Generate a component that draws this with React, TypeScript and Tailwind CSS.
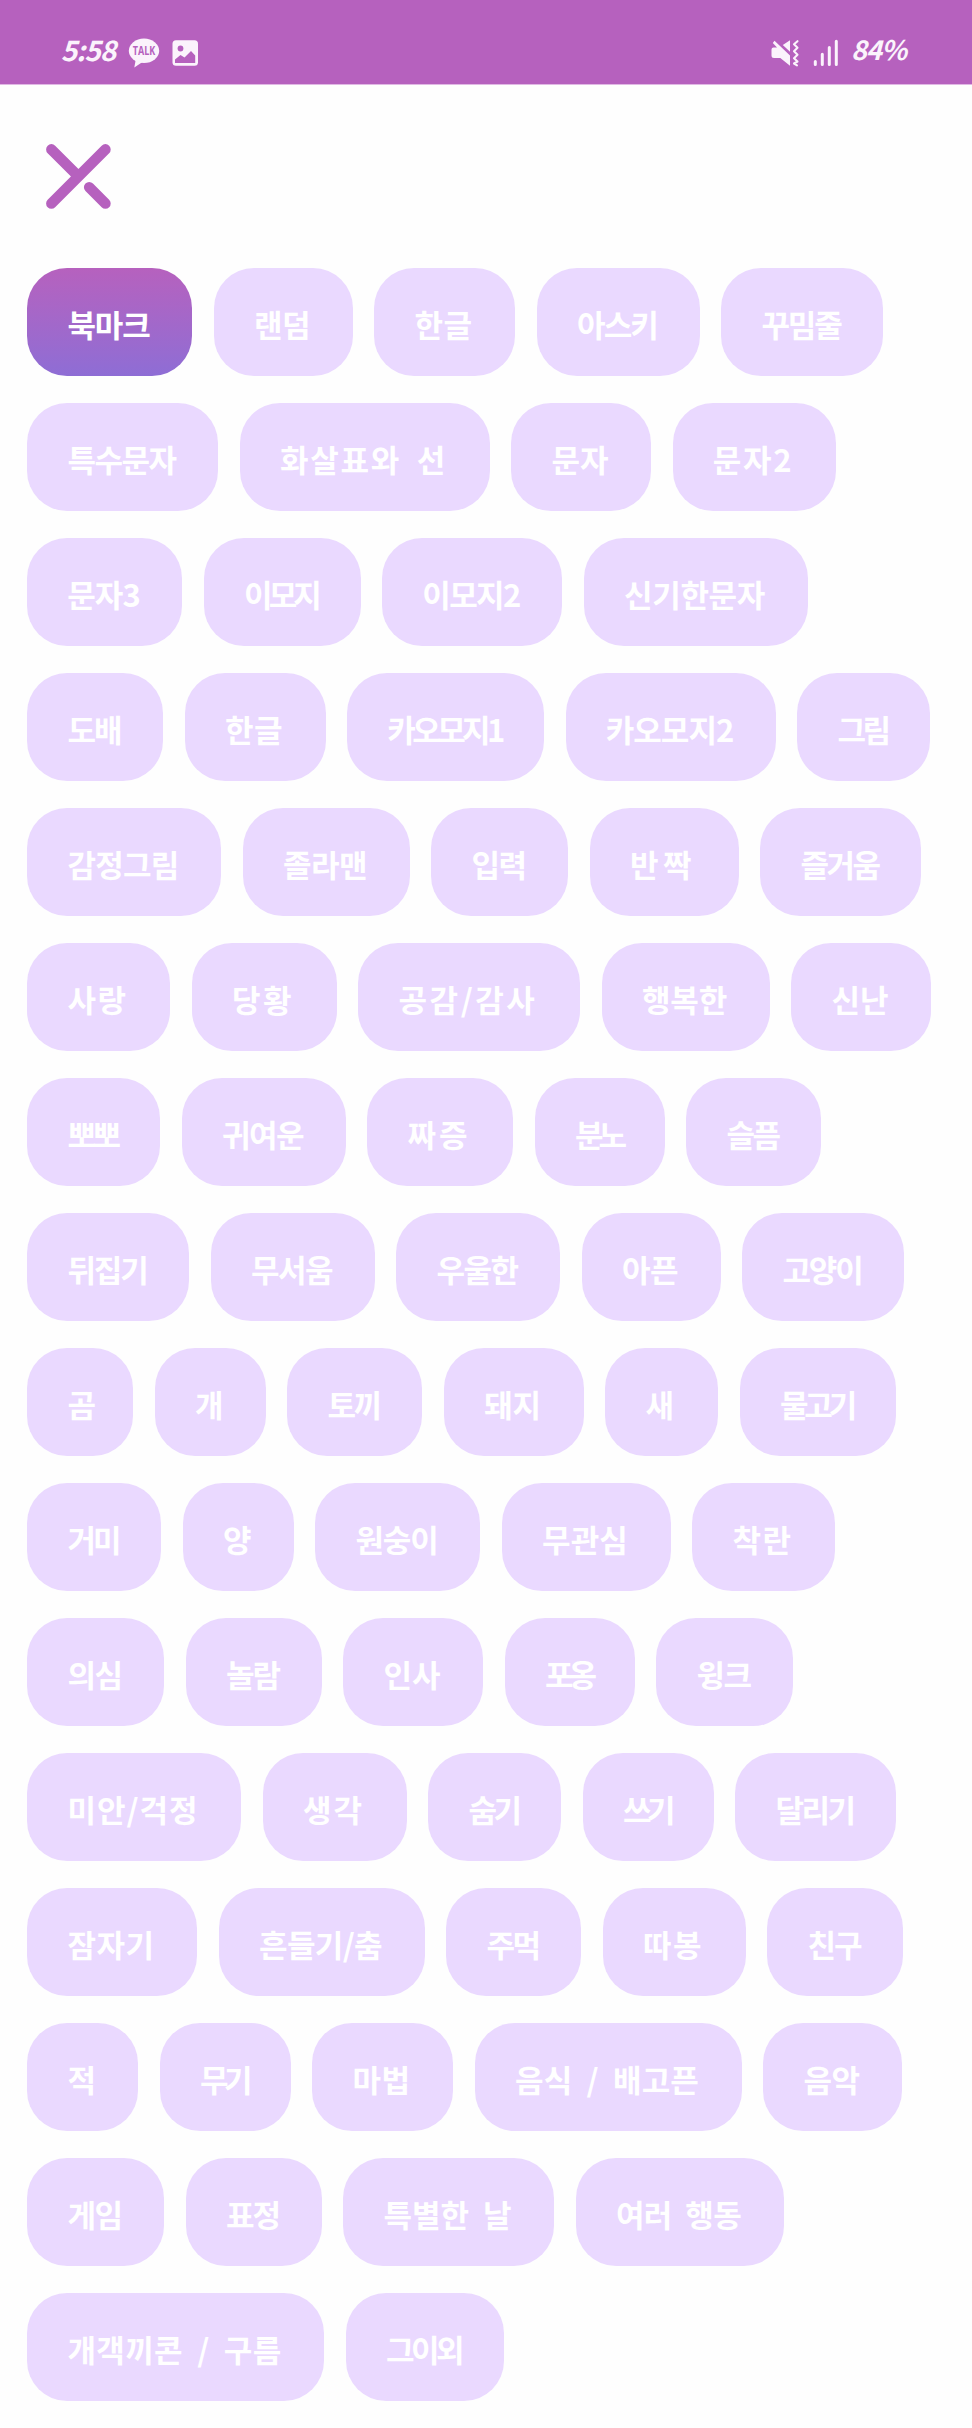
import { useState } from "react";
import clsx from "clsx";

type Category = {
    name: string;
    width: number;
}

// left + right padding inside a chip
const CHIP_PADDING = 83;
const FONT_SIZE = 31;

const categories: Category[] = [
    { name: "북마크", width: 165 },
    { name: "랜덤", width: 139 },
    { name: "한글", width: 141 },
    { name: "아스키", width: 163 },
    { name: "꾸밈줄", width: 162 },
    { name: "특수문자", width: 191 },
    { name: "화살표와 선", width: 250 },
    { name: "문자", width: 140 },
    { name: "문자2", width: 163 },
    { name: "문자3", width: 155 },
    { name: "이모지", width: 157 },
    { name: "이모지2", width: 180 },
    { name: "신기한문자", width: 224 },
    { name: "도배", width: 136 },
    { name: "한글", width: 141 },
    { name: "카오모지1", width: 197 },
    { name: "카오모지2", width: 210 },
    { name: "그림", width: 133 },
    { name: "감정그림", width: 194 },
    { name: "졸라맨", width: 167 },
    { name: "입력", width: 137 },
    { name: "반짝", width: 149 },
    { name: "즐거움", width: 161 },
    { name: "사랑", width: 143 },
    { name: "당황", width: 145 },
    { name: "공감/감사", width: 222 },
    { name: "행복한", width: 168 },
    { name: "신난", width: 140 },
    { name: "뽀뽀", width: 133 },
    { name: "귀여운", width: 164 },
    { name: "짜증", width: 146 },
    { name: "분노", width: 130 },
    { name: "슬픔", width: 135 },
    { name: "뒤집기", width: 162 },
    { name: "무서움", width: 164 },
    { name: "우울한", width: 164 },
    { name: "아픈", width: 139 },
    { name: "고양이", width: 162 },
    { name: "곰", width: 106 },
    { name: "개", width: 111 },
    { name: "토끼", width: 135 },
    { name: "돼지", width: 140 },
    { name: "새", width: 113 },
    { name: "물고기", width: 156 },
    { name: "거미", width: 134 },
    { name: "양", width: 111 },
    { name: "원숭이", width: 165 },
    { name: "무관심", width: 169 },
    { name: "착란", width: 143 },
    { name: "의심", width: 137 },
    { name: "놀람", width: 136 },
    { name: "인사", width: 140 },
    { name: "포옹", width: 130 },
    { name: "윙크", width: 137 },
    { name: "미안/걱정", width: 214 },
    { name: "생각", width: 144 },
    { name: "숨기", width: 133 },
    { name: "쓰기", width: 131 },
    { name: "달리기", width: 161 },
    { name: "잠자기", width: 170 },
    { name: "흔들기/춤", width: 206 },
    { name: "주먹", width: 135 },
    { name: "따봉", width: 143 },
    { name: "친구", width: 136 },
    { name: "적", width: 111 },
    { name: "무기", width: 131 },
    { name: "마법", width: 141 },
    { name: "음식 / 배고픈", width: 267 },
    { name: "음악", width: 139 },
    { name: "게임", width: 137 },
    { name: "표정", width: 136 },
    { name: "특별한 날", width: 211 },
    { name: "여러 행동", width: 208 },
    { name: "개객끼콘 / 구름", width: 297 },
    { name: "그이외", width: 158 },
];

// letter spacing that makes the name fill its chip
const getTracking = (category: Category) => {
    const chars = category.name.split('');
    const natural = chars.reduce((sum, char) => {
        if (char === ' ') return sum + 0.224 * FONT_SIZE + 7;
        if (char === '/') return sum + 0.39 * FONT_SIZE;
        if (/[0-9]/.test(char)) return sum + 0.57 * FONT_SIZE;
        return sum + 0.92 * FONT_SIZE;
    }, 0);
    return (category.width - CHIP_PADDING - natural) / chars.length;
}

const StatusBar = () => {
    return (
        <div className="flex h-[84px] items-start justify-between bg-[#b661be] pl-[60px] pr-[65px] pt-[36px] text-[#fbf3fc] shadow-[0_1px_0_#e0b8e4]">
            <div className="flex items-center">
                <span className="-mt-[7px] w-[56px] whitespace-nowrap text-center text-[28px] font-bold italic leading-[30px] tracking-[-1px]">5:58</span>
                {/* Talk */}
                <svg className="ml-[12px] h-[32px] w-[32px]" viewBox="0 0 32 32">
                    <ellipse cx="16" cy="14.8" rx="15.2" ry="12.2" fill="currentColor" />
                    <path d="M8 22 6.3 31.5 16 25Z" fill="currentColor" />
                    <text x="16" y="19" textAnchor="middle" textLength="22.5" lengthAdjust="spacingAndGlyphs" fontSize="11.5" fontWeight="700" fill="#b661be" fontFamily="Open Sans, sans-serif">TALK</text>
                </svg>
                {/* Picture */}
                <svg className="ml-[12px] h-[32px] w-[26px]" viewBox="0 0 26 32">
                    <rect x="0.5" y="4.3" width="25.5" height="25.5" rx="3.5" fill="currentColor" />
                    <circle cx="8.5" cy="12.5" r="2.9" fill="#b661be" />
                    <path d="M3 27V23.5L8.5 19 12.5 21.5 19 15 23.2 19.5V27Z" fill="#b661be" />
                </svg>
            </div>
            <div className="flex items-center">
                {/* Sound off, vibration */}
                <svg className="h-[32px] w-[28px]" viewBox="0 0 28 32">
                    <path d="M0.5 13.5Q0.5 11.5 2.5 11.5H6L1.8 7 3.5 4.8 19 19.5V29.8L9.3 22H3Q0.5 22 0.5 19.5ZM11.8 9 19 4.2V15.8Z" fill="currentColor" />
                    <path d="M26.5 5.2 23 8.3 26.5 11.8 23 15.3 26.5 18.8 23 22.3 26.5 25.5 23 27.5 26 29.3" fill="none" stroke="currentColor" strokeWidth="2.1" strokeLinejoin="round" strokeLinecap="round" />
                </svg>
                {/* Signal */}
                <svg className="ml-[14px] h-[32px] w-[26px]" viewBox="0 0 26 32" stroke="currentColor" strokeWidth="3" strokeLinecap="round">
                    <path d="M2.3 25.5V28.4M9.3 18.2V28.4M16.3 11.5V28.4M23.3 5.3V28.4" />
                </svg>
                <span className="-mt-[7px] ml-[11px] w-[57px] whitespace-nowrap text-center text-[27px] font-bold italic leading-[30px] tracking-[-1px]">84%</span>
            </div>
        </div>
    )
}

const App = () => {

    const [selected, setSelected] = useState(0);

    return (
        <div className="h-[2428px] w-[972px] overflow-hidden bg-[#fefefe] font-['Noto_Sans_CJK_KR',sans-serif]">
            <StatusBar />

            {/* Close */}
            <div className="h-[184px] pl-[45px] pt-[59px]">
                <button type="button" aria-label="close" className="block">
                    <svg className="h-[68px] w-[68px]" viewBox="0 0 68 68" fill="none" stroke="#b661be" strokeWidth="10.6" strokeLinecap="round">
                        <path d="M6.4 60.4 60.4 6.4M6.4 6.4 33 33M44.2 44.2 60.4 60.4" />
                    </svg>
                </button>
            </div>

            {/* Categories */}
            <div className="flex flex-wrap gap-x-[21.5px] gap-y-[27px] px-[27px]">
                {categories.map((category, index) => (
                    <button
                        key={index}
                        type="button"
                        onClick={() => setSelected(index)}
                        className={clsx(
                            "flex h-[108px] shrink-0 items-center justify-center whitespace-nowrap rounded-[40px] pr-[2px] pt-[3px] text-[31px] font-bold leading-none text-white [word-spacing:7px]",
                            index === selected ? "bg-linear-to-b from-[#b661be] to-[#8e6dd5]" : "bg-[#ead9ff]"
                        )}
                        style={{ width: category.width, letterSpacing: getTracking(category) }}
                    >
                        {category.name}
                    </button>
                ))}
            </div>
        </div>
    )
}

export default App;
